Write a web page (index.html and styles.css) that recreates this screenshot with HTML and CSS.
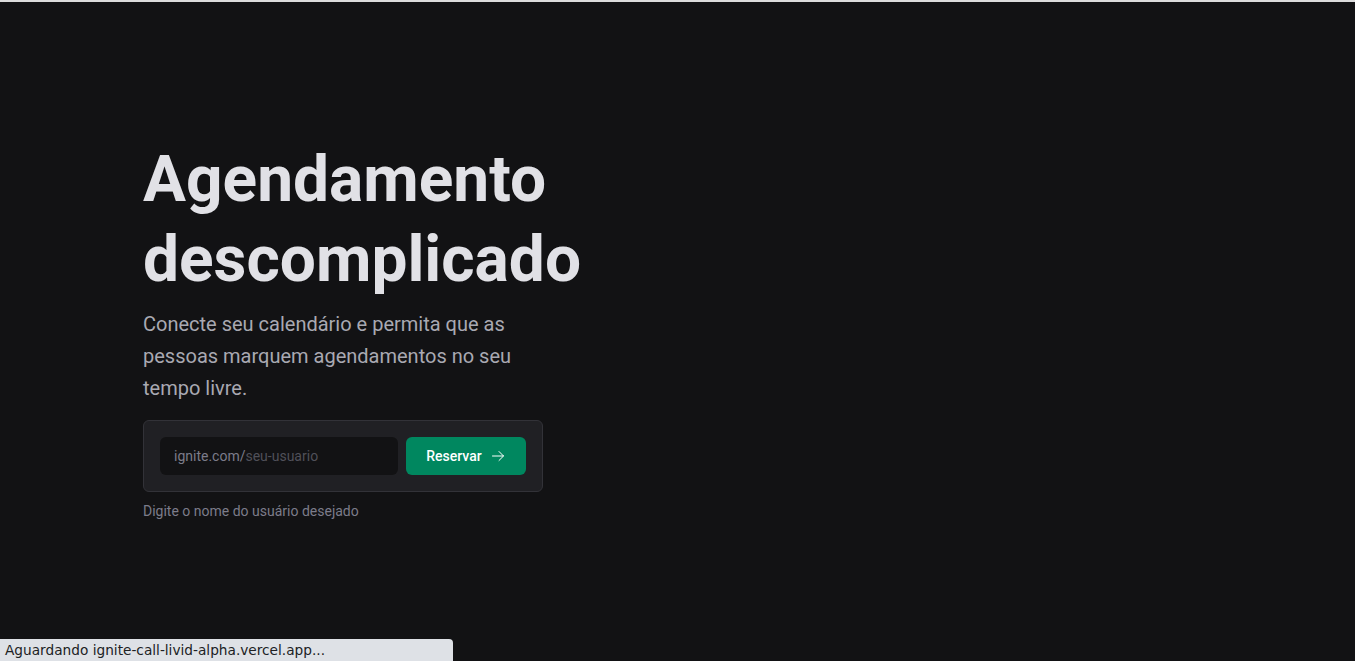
FILE: index.html
```html
<!DOCTYPE html>
<html lang="pt-BR">
<head>
<meta charset="utf-8">
<title>Ignite Call</title>
<link rel="stylesheet" href="styles.css">
</head>
<body>
<div class="topline"></div>
<main class="container">
  <section class="hero">
    <h1 class="heading">Agendamento descomplicado</h1>
    <p class="lead">Conecte seu calendário e permita que as pessoas marquem agendamentos no seu tempo livre.</p>
    <form class="form">
      <label class="input">
        <span class="prefix">ignite.com/</span>
        <input type="text" placeholder="seu-usuario">
      </label>
      <button type="button" class="button">
        Reservar
        <svg width="16" height="16" viewBox="0 0 256 256" fill="none" stroke="currentColor" stroke-width="16" stroke-linecap="round" stroke-linejoin="round"><line x1="40" y1="128" x2="216" y2="128"/><polyline points="144 56 216 128 144 200"/></svg>
      </button>
    </form>
    <p class="helper">Digite o nome do usuário desejado</p>
  </section>
</main>
<div class="status">Aguardando ignite-call-livid-alpha.vercel.app...</div>
</body>
</html>
```
FILE: styles.css
```css
* { box-sizing: border-box; }
html, body { margin: 0; padding: 0; }
body {
  background: #121214;
  color: #E1E1E6;
  font-family: Roboto, "Liberation Sans", sans-serif;
  -webkit-font-smoothing: antialiased;
}
.topline {
  height: 2px;
  background: #dcdcdc;
}
.container {
  height: 657px;
  display: flex;
  align-items: center;
  padding-left: 143px;
}
.hero {
  width: 400px;
}
.heading {
  margin: 0;
  font-size: 64px;
  line-height: 80px;
  font-weight: 700;
  color: #E1E1E6;
}
.lead {
  margin: 8px 0 0;
  font-size: 20px;
  line-height: 32px;
  color: #A9A9B2;
}
.form {
  margin-top: 16px;
  display: grid;
  grid-template-columns: minmax(0, 1fr) auto;
  gap: 8px;
  padding: 16px;
  background: #202024;
  border: 1px solid #323238;
  border-radius: 6px;
}
.input {
  display: flex;
  align-items: center;
  min-width: 0;
  height: 38px;
  padding: 0 14px;
  background: #121214;
  border-radius: 6px;
  font-size: 14px;
}
.prefix { color: #7C7C8A; }
.input input {
  flex: 1;
  width: 100%;
  min-width: 0;
  background: transparent;
  border: 0;
  outline: 0;
  padding: 0;
  font: inherit;
  color: #E1E1E6;
}
.input input::placeholder { color: #505059; }
.button {
  height: 38px;
  min-width: 120px;
  padding: 0 16px;
  display: flex;
  align-items: center;
  justify-content: center;
  gap: 8px;
  background: #00875F;
  color: #fff;
  border: 0;
  border-radius: 6px;
  font-family: inherit;
  font-size: 14px;
  font-weight: 500;
}
.helper {
  margin: 8px 0 0;
  font-size: 14px;
  line-height: 22px;
  color: #7C7C8A;
}
.status {
  position: fixed;
  left: 0;
  bottom: 0;
  width: 453px;
  height: 22px;
  padding: 0 5px;
  background: #dee1e6;
  color: #202124;
  border-top-right-radius: 4px;
  font-family: "DejaVu Sans", sans-serif;
  font-size: 13.7px;
  line-height: 22px;
}
```
